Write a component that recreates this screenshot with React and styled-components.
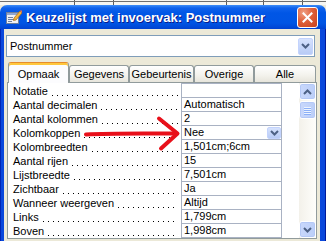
import React from "react";
import styled, { createGlobalStyle } from "styled-components";

const Global = createGlobalStyle`
  html, body { margin: 0; padding: 0; background: #ECE9D8; overflow: hidden; }
  body { font-family: "Liberation Sans", Arial, sans-serif; }
  * { box-sizing: border-box; }
`;

const Screen = styled.div`
  position: relative;
  width: 326px;
  height: 241px;
  overflow: hidden;
  display: flex;
  flex-direction: column;
`;

const BackStrip = styled.div`
  flex: none;
  height: 5px;
  background:
    linear-gradient(#6f6f6f, #6f6f6f) 0 1px / 100% 1px no-repeat,
    linear-gradient(#5a5a5a, #5a5a5a) 74px 0 / 1px 5px no-repeat,
    linear-gradient(#5a5a5a, #5a5a5a) 113px 0 / 1px 5px no-repeat,
    linear-gradient(#5a5a5a, #5a5a5a) 226px 0 / 1px 5px no-repeat,
    linear-gradient(#5a5a5a, #5a5a5a) 263px 0 / 1px 5px no-repeat,
    linear-gradient(#5a5a5a, #5a5a5a) 302px 0 / 1px 5px no-repeat,
    #F6F6F2;
`;

const Window = styled.div`
  flex: 1;
  min-height: 0;
  display: flex;
  flex-direction: column;
`;

const TitleBar = styled.div`
  flex: none;
  height: 24px;
  display: flex;
  align-items: center;
  padding: 0 8px 0 6px;
  border-radius: 7px 7px 0 0;
  background: linear-gradient(
    #3D8DF7 0px,
    #0F62EC 3px,
    #0056E6 8px,
    #0055E4 18px,
    #0049D8 22px,
    #0041CF 24px
  );
`;

const TitleText = styled.div`
  flex: 1;
  margin-left: 4px;
  color: #fff;
  font: bold 13px "Liberation Sans", Arial, sans-serif;
  text-shadow: 1px 1px 0 #0A1C8C;
  white-space: nowrap;
  overflow: hidden;
`;

const CloseBtn = styled.div`
  width: 21px;
  height: 21px;
  border: 1px solid #fff;
  border-radius: 3px;
  background: radial-gradient(circle at 30% 25%, #F0A185 0%, #E0603A 45%, #C8401C 100%);
  display: flex;
  align-items: center;
  justify-content: center;
`;

const Frame = styled.div`
  flex: 1;
  min-height: 0;
  display: flex;
  background: #0A48DC;
  padding: 0 6px 0 4px;
  box-shadow: inset 1px 0 0 #0026B5, inset -1px 0 0 #001A9A;
`;

const Client = styled.div`
  flex: 1;
  display: flex;
  flex-direction: column;
  background: #ECE9D8;
  padding-top: 6px;
`;

const Combo = styled.div`
  margin-left: 2px;
  width: 309px;
  height: 22px;
  border: 1px solid #7F9DB9;
  background: #fff;
  display: flex;
  align-items: center;
  padding: 0 1px 0 3px;
  font-size: 11px;
  color: #000;
`;

const ComboText = styled.span`
  flex: 1;
`;

const XpDrop = styled.div`
  width: ${(p) => p.$w}px;
  height: ${(p) => p.$h}px;
  border: 1px solid #C3D3FD;
  border-radius: 2px;
  background: linear-gradient(#D6E2FD, #B8CBF6);
  display: flex;
  align-items: center;
  justify-content: center;
  margin-left: auto;
  flex: none;
`;

const Tabs = styled.div`
  display: flex;
  align-items: flex-start;
  margin: 5px 0 0 4px;
  height: 21px;
  position: relative;
  z-index: 1;
`;

const Tab = styled.div`
  width: ${(p) => p.$w}px;
  height: ${(p) => (p.$active ? 21 : 17)}px;
  margin-top: ${(p) => (p.$active ? 0 : 3)}px;
  border: 1px solid #919B9C;
  border-bottom: none;
  border-top-color: ${(p) => (p.$active ? "#E68B2C" : "#919B9C")};
  border-radius: 3px 3px 0 0;
  background: ${(p) =>
    p.$active ? "#FCFCFE" : "linear-gradient(#FFFFFF, #F3F2EC 60%, #E7E5DC)"};
  box-shadow: ${(p) => (p.$active ? "inset 0 2px 0 #FFC73C" : "none")};
  display: flex;
  align-items: center;
  justify-content: center;
  padding-top: ${(p) => (p.$active ? 1 : 0)}px;
  font-size: 11px;
  color: #000;
  white-space: nowrap;
`;

const Panel = styled.div`
  margin: -1px 0 0 3px;
  width: 310px;
  height: 157px;
  border: 1px solid #919B9C;
  background: #fff;
  display: flex;
`;

const Rows = styled.div`
  width: 291px;
  display: flex;
  flex-direction: column;
`;

const Row = styled.div`
  display: grid;
  grid-template-columns: 173px 101px;
  height: ${(p) => (p.$first ? 15 : 14)}px;
`;

const Label = styled.div`
  display: flex;
  align-items: flex-end;
  padding: 0 3px 0 5px;
  font-size: 11px;
  line-height: 13px;
  white-space: nowrap;
  overflow: hidden;
  color: #000;
`;

const Dots = styled.span`
  flex: 1;
  align-self: stretch;
  margin-left: 4px;
  background-image: linear-gradient(to right, #000 1px, transparent 1px);
  background-size: 5px 1px;
  background-repeat: repeat-x;
  background-position: left bottom 2px;
`;

const Value = styled.div`
  border: 1px solid #A9B2C3;
  border-top: ${(p) => (p.$first ? "1px solid #A9B2C3" : "none")};
  display: flex;
  align-items: center;
  padding-left: 2px;
  font-size: 11px;
  line-height: 13px;
  white-space: nowrap;
  overflow: hidden;
  color: #000;
`;

const Scrollbar = styled.div`
  width: 17px;
  display: flex;
  flex-direction: column;
  background: linear-gradient(to right, #F3F1EA, #FEFEFB);
`;

const ScrollBtn = styled.div`
  height: 17px;
  flex: none;
  border: 1px solid #fff;
  border-radius: 3px;
  background: linear-gradient(to right, #C9D8FC, #BBCEF8);
  box-shadow: inset 0 0 0 1px #B4C8F6;
  display: flex;
  align-items: center;
  justify-content: center;
`;

const Thumb = styled(ScrollBtn)`
  height: 18px;
  margin-top: 1px;
  flex-direction: column;
  gap: 1px;
`;

const Grip = styled.div`
  width: 7px;
  height: 1px;
  background: #EEF4FE;
  box-shadow: 0 1px 0 #8CB0F8;
`;

const Spacer = styled.div`
  flex: 1;
`;

const ArrowOverlay = styled.svg`
  position: absolute;
  left: 0;
  top: 0;
  pointer-events: none;
`;

const Chevron = ({ up }) => (
  <svg width="9" height="6" viewBox="0 0 9 6">
    <polyline
      points={up ? "1,5 4.5,1.5 8,5" : "1,1 4.5,4.5 8,1"}
      fill="none"
      stroke="#4D6185"
      strokeWidth="2"
    />
  </svg>
);

const FormIcon = () => (
  <svg width="16" height="16" viewBox="0 0 16 16">
    <rect x="0.5" y="3.5" width="12" height="11" fill="#EEF1F6" stroke="#6E7F9E" />
    <rect x="1" y="4" width="11" height="2" fill="#8FA6CF" />
    <rect x="2" y="8" width="5" height="1" fill="#6E7F9E" />
    <rect x="2" y="10" width="7" height="1" fill="#6E7F9E" />
    <rect x="2" y="12" width="4" height="1" fill="#6E7F9E" />
    <polygon points="8,9 14,2 16,4 10,11 7.5,11.5" fill="#F2B33D" stroke="#A56A12" strokeWidth="0.7" />
    <polygon points="14,2 15,1 16.5,2.5 16,4" fill="#E0705A" />
  </svg>
);

const tabs = [
  { name: "Opmaak", w: 61, active: true },
  { name: "Gegevens", w: 60 },
  { name: "Gebeurtenis", w: 65 },
  { name: "Overige", w: 60 },
  { name: "Alle", w: 62 },
];

const props = [
  ["Notatie", ""],
  ["Aantal decimalen", "Automatisch"],
  ["Aantal kolommen", "2"],
  ["Kolomkoppen", "Nee", true],
  ["Kolombreedten", "1,501cm;6cm"],
  ["Aantal rijen", "15"],
  ["Lijstbreedte", "7,501cm"],
  ["Zichtbaar", "Ja"],
  ["Wanneer weergeven", "Altijd"],
  ["Links", "1,799cm"],
  ["Boven", "1,998cm"],
];

export default function App() {
  return (
    <Screen>
      <Global />
      <BackStrip />
      <Window>
        <TitleBar>
          <FormIcon />
          <TitleText>Keuzelijst met invoervak: Postnummer</TitleText>
          <CloseBtn>
            <svg width="11" height="11" viewBox="0 0 11 11">
              <path d="M1.5 1.5 L9.5 9.5 M9.5 1.5 L1.5 9.5" stroke="#fff" strokeWidth="2" strokeLinecap="square" />
            </svg>
          </CloseBtn>
        </TitleBar>
        <Frame>
          <Client>
            <Combo>
              <ComboText>Postnummer</ComboText>
              <XpDrop $w={15} $h={17}>
                <Chevron />
              </XpDrop>
            </Combo>
            <Tabs>
              {tabs.map((t) => (
                <Tab key={t.name} $w={t.w} $active={t.active}>
                  {t.name}
                </Tab>
              ))}
            </Tabs>
            <Panel>
              <Rows>
                {props.map(([label, value, drop], i) => (
                  <Row key={label} $first={i === 0}>
                    <Label>
                      {label}
                      <Dots />
                    </Label>
                    <Value $first={i === 0}>
                      {value}
                      {drop && (
                        <XpDrop $w={14} $h={12}>
                          <Chevron />
                        </XpDrop>
                      )}
                    </Value>
                  </Row>
                ))}
              </Rows>
              <Scrollbar>
                <ScrollBtn>
                  <Chevron up />
                </ScrollBtn>
                <Thumb>
                  <Grip />
                  <Grip />
                  <Grip />
                  <Grip />
                </Thumb>
                <Spacer />
                <ScrollBtn>
                  <Chevron />
                </ScrollBtn>
              </Scrollbar>
            </Panel>
          </Client>
        </Frame>
      </Window>
      <ArrowOverlay width="326" height="241" viewBox="0 0 326 241">
        <path
          d="M86 134.5 C110 133, 140 133.5, 176 133.5"
          fill="none"
          stroke="#E8101A"
          strokeWidth="4"
          strokeLinecap="round"
        />
        <polyline
          points="159,118.5 177.5,133.5 161,148.5"
          fill="none"
          stroke="#E8101A"
          strokeWidth="4"
          strokeLinecap="round"
          strokeLinejoin="round"
        />
      </ArrowOverlay>
    </Screen>
  );
}
